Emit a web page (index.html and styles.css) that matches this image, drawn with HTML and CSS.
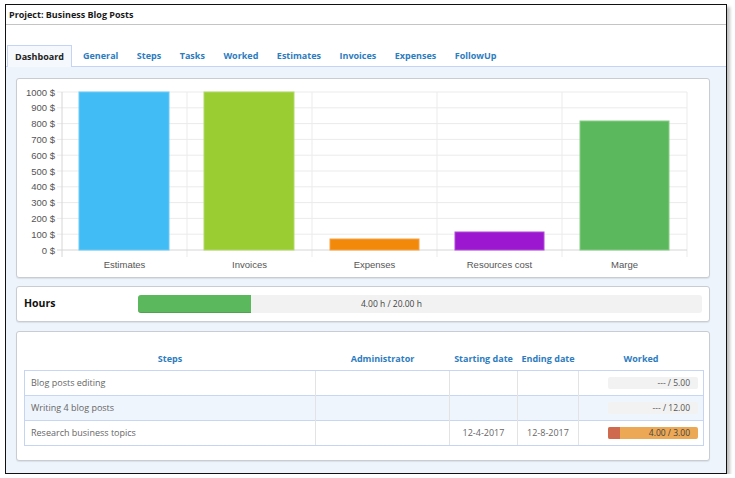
FILE: index.html
```html
<!DOCTYPE html>
<html>
<head>
<meta charset="utf-8">
<link rel="stylesheet" href="styles.css">
</head>
<body>
<div class="window">
  <div class="titlebar">Project: Business Blog Posts</div>
  <div class="spacer"></div>
  <div class="tabs">
    <div class="tab active">Dashboard</div>
    <div class="tab">General</div>
    <div class="tab">Steps</div>
    <div class="tab">Tasks</div>
    <div class="tab">Worked</div>
    <div class="tab">Estimates</div>
    <div class="tab">Invoices</div>
    <div class="tab">Expenses</div>
    <div class="tab">FollowUp</div>
  </div>
  <div class="content">
    <div class="panel chart-panel">
      <svg class="chart" width="692" height="198" viewBox="0 0 692 198">
        <g class="grid">
          <line x1="40" y1="13" x2="670" y2="13"/>
          <line x1="40" y1="28.8" x2="670" y2="28.8"/>
          <line x1="40" y1="44.6" x2="670" y2="44.6"/>
          <line x1="40" y1="60.4" x2="670" y2="60.4"/>
          <line x1="40" y1="76.2" x2="670" y2="76.2"/>
          <line x1="40" y1="92" x2="670" y2="92"/>
          <line x1="40" y1="107.8" x2="670" y2="107.8"/>
          <line x1="40" y1="123.6" x2="670" y2="123.6"/>
          <line x1="40" y1="139.4" x2="670" y2="139.4"/>
          <line x1="40" y1="155.2" x2="670" y2="155.2"/>
          <line x1="170" y1="13" x2="170" y2="178"/>
          <line x1="295" y1="13" x2="295" y2="178"/>
          <line x1="420" y1="13" x2="420" y2="178"/>
          <line x1="545" y1="13" x2="545" y2="178"/>
          <line x1="670" y1="13" x2="670" y2="178"/>
        </g>
        <g class="axis">
          <line x1="45" y1="13" x2="45" y2="178"/>
          <line x1="40" y1="171" x2="670" y2="171"/>
        </g>
        <g class="ylabels">
          <text x="38" y="16.5">1000 $</text>
          <text x="38" y="32.3">900 $</text>
          <text x="38" y="48.1">800 $</text>
          <text x="38" y="63.9">700 $</text>
          <text x="38" y="79.7">600 $</text>
          <text x="38" y="95.5">500 $</text>
          <text x="38" y="111.3">400 $</text>
          <text x="38" y="127.1">300 $</text>
          <text x="38" y="142.9">200 $</text>
          <text x="38" y="158.7">100 $</text>
          <text x="38" y="174.5">0 $</text>
        </g>
        <rect class="bar b1" x="62" y="13" width="90" height="158"/>
        <rect class="bar b2" x="187" y="13" width="90" height="158"/>
        <rect class="bar b3" x="313" y="160" width="89" height="11"/>
        <rect class="bar b4" x="438" y="153" width="89" height="18"/>
        <rect class="bar b5" x="563" y="42" width="89" height="129"/>
        <g class="xlabels">
          <text x="107.5" y="189">Estimates</text>
          <text x="232.5" y="189">Invoices</text>
          <text x="357.5" y="189">Expenses</text>
          <text x="482.5" y="189">Resources cost</text>
          <text x="607.5" y="189">Marge</text>
        </g>
      </svg>
    </div>

    <div class="panel hours-panel">
      <div class="hours-label">Hours</div>
      <div class="hours-bar">
        <div class="hours-fill" style="width:20%"></div>
        <div class="hours-text">4.00 h / 20.00 h</div>
      </div>
    </div>

    <div class="panel steps-panel">
      <table class="steps">
        <thead>
          <tr>
            <th class="c1">Steps</th>
            <th class="c2">Administrator</th>
            <th class="c3">Starting date</th>
            <th class="c4">Ending date</th>
            <th class="c5">Worked</th>
          </tr>
        </thead>
        <tbody>
          <tr>
            <td class="name">Blog posts editing</td>
            <td></td><td></td><td></td>
            <td class="worked"><div class="wbar"><span class="wtext">--- / 5.00</span></div></td>
          </tr>
          <tr class="alt">
            <td class="name">Writing 4 blog posts</td>
            <td></td><td></td><td></td>
            <td class="worked"><div class="wbar"><span class="wtext">--- / 12.00</span></div></td>
          </tr>
          <tr>
            <td class="name">Research business topics</td>
            <td></td>
            <td class="date">12-4-2017</td>
            <td class="date">12-8-2017</td>
            <td class="worked"><div class="wbar over"><div class="wred"></div><span class="wtext">4.00 / 3.00</span></div></td>
          </tr>
        </tbody>
      </table>
    </div>
  </div>
</div>
</body>
</html>
```

FILE: styles.css
```css
html, body {
  margin: 0;
  padding: 0;
  background: #ffffff;
}
body {
  padding: 4px 0 0 5px;
  font-family: "Open Sans", "DejaVu Sans", sans-serif;
}
.window {
  width: 720px;
  height: 468px;
  border: 1px solid #111;
  box-shadow: 3px 3px 3px rgba(0,0,0,0.25);
  display: flex;
  flex-direction: column;
  background: #fff;
}
.titlebar {
  height: 19px;
  border-bottom: 1px solid #c4c4c4;
  font-size: 9px;
  font-weight: 700;
  color: #1a1a1a;
  line-height: 20px;
  padding-left: 3px;
}
.spacer {
  height: 20px;
}
.tabs {
  display: flex;
  height: 21px;
  border-bottom: 1px solid #c5d4f4;
  padding-left: 1px;
}
.tab {
  font-size: 9px;
  font-weight: 700;
  color: #2d7cc0;
  line-height: 21px;
  padding: 0 8.5px 0 10px;
}
.tab.active {
  color: #222;
  padding: 1px 7px 0 7px;
  margin-right: 1px;
  border: 1px solid #c5d4f4;
  border-bottom: none;
  background: #f5f9fe;
  height: 22px;
  margin-bottom: -1px;
  line-height: 20px;
  box-sizing: border-box;
}
.content {
  flex: 1;
  background: #edf4fc;
  padding: 11px 16px 0 10px;
  display: flex;
  flex-direction: column;
}
.panel {
  background: #fff;
  border: 1px solid #c9ccd2;
  border-radius: 3px;
  box-shadow: 0 1px 1px rgba(0,0,0,0.08);
}
.chart-panel {
  height: 198px;
}
.chart {
  display: block;
}
.grid line {
  stroke: #ebebeb;
  stroke-width: 1;
}
.axis line {
  stroke: #d6d6d6;
  stroke-width: 1;
}
.ylabels text {
  font-family: "Liberation Sans", Arial, sans-serif;
  font-size: 9.5px;
  fill: #555;
  text-anchor: end;
}
.xlabels text {
  font-family: "Liberation Sans", Arial, sans-serif;
  font-size: 9.5px;
  fill: #555;
  text-anchor: middle;
}
.bar { stroke-width: 1; }
.b1 { fill: #42bcf4; stroke: #6ccbf6; }
.b2 { fill: #9acd32; stroke: #b2d96a; }
.b3 { fill: #f2890a; stroke: #f5a447; }
.b4 { fill: #9b18d0; stroke: #b04ada; }
.b5 { fill: #5cb85c; stroke: #86cc86; }

.hours-panel {
  margin-top: 8px;
  height: 34px;
  display: flex;
  align-items: center;
  padding: 0 7px;
}
.hours-label {
  width: 114px;
  font-size: 10.5px;
  font-weight: 700;
  color: #111;
  margin-top: -2px;
}
.hours-bar {
  flex: 1;
  height: 18px;
  background: #f2f2f2;
  border-radius: 3px;
  position: relative;
}
.hours-fill {
  height: 18px;
  background: #5cb85c;
  border-radius: 3px 0 0 3px;
  box-shadow: inset 0 -1px 0 rgba(0,0,0,0.12);
}
.hours-text {
  position: absolute;
  left: 223px;
  top: 0;
  line-height: 18px;
  font-size: 8.5px;
  color: #444;
}

.steps-panel {
  margin-top: 9px;
  height: 128px;
  padding: 0 6px 0 7px;
}
.steps {
  width: 680px;
  border-collapse: collapse;
  font-size: 9px;
}
.steps th {
  height: 38px;
  padding: 0 0 5px 0;
  vertical-align: bottom;
  color: #2d7cc0;
  font-weight: 700;
  text-align: center;
  line-height: 12px;
  box-sizing: border-box;
}
.steps .c1 { width: 291px; }
.steps .c2 { width: 134px; }
.steps .c3 { width: 68px; }
.steps .c4 { width: 61px; }
.steps .c5 { width: 125px; }
.steps tbody {
  border: 1px solid #c6d3f1;
}
.steps td {
  height: 24px;
  padding: 0;
  border-left: 1px solid #e3e3e3;
  border-top: 1px solid #c9d6f3;
  color: #666;
  vertical-align: middle;
}
.steps td:first-child {
  border-left: 1px solid #c6d3f1;
}
.steps td:last-child {
  border-right: 1px solid #c6d3f1;
}
.steps tbody tr:last-child td {
  border-bottom: 1px solid #c6d3f1;
}
.steps tr.alt td {
  background: #eff5fc;
}
.steps td.name {
  padding-left: 6px;
}
.steps td.date {
  text-align: center;
}
.steps td.worked {
  padding-right: 5px;
}
.wbar {
  margin-left: auto;
  width: 90px;
  height: 12px;
  background: #f2f2f2;
  border-radius: 2px;
  text-align: right;
  position: relative;
  display: flex;
  justify-content: flex-end;
  align-items: center;
}
.wbar.over {
  background: #eca854;
}
.wred {
  position: absolute;
  left: 0;
  top: 0;
  width: 12px;
  height: 12px;
  background: #cf6a4e;
  border-radius: 2px 0 0 2px;
}
.wtext {
  font-size: 8.5px;
  color: #555;
  padding-right: 8px;
  line-height: 12px;
}
.wbar.over .wtext {
  color: #444;
}
```
